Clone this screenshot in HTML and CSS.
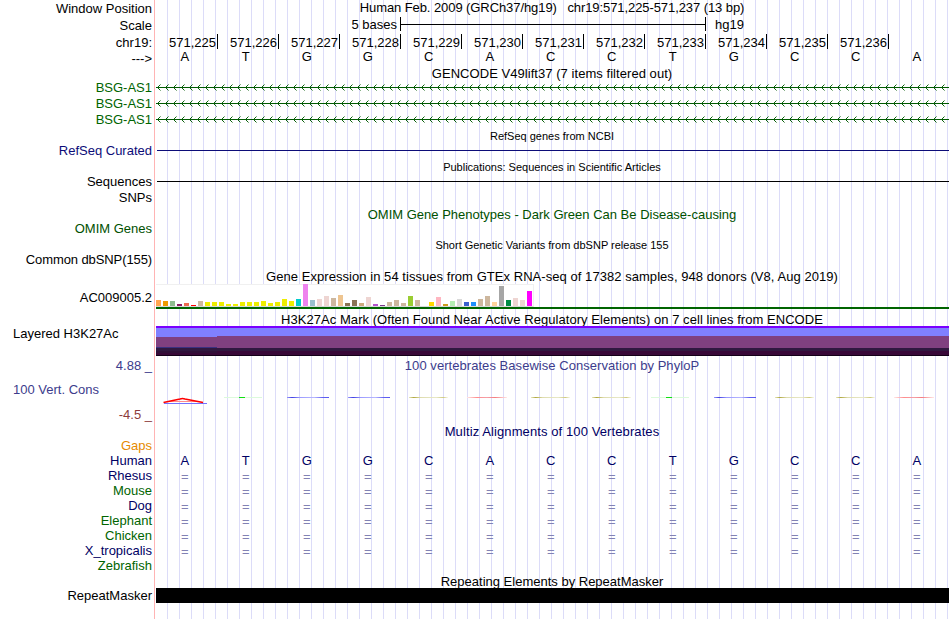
FILE: index.html
```html
<!DOCTYPE html>
<html lang="en">
  <head>
    <meta charset="UTF-8" />
    <meta name="viewport" content="width=device-width, initial-scale=1.0" />
    <title>chr19:571,225-571,237</title>
    <link rel="stylesheet" href="styles.css">
  </head>
  <body>
    <main class="browser">
      <!-- ruler -->
      <div class="row ruler">
        <div class="label">Window Position</div>
        <div class="title position-title">Human Feb. 2009 (GRCh37/hg19) &nbsp; chr19:571,225-571,237 (13 bp)</div>
      </div>
      <div class="row ruler">
        <div class="label">Scale</div>
        <div class="scale">
          <span class="scale-text">5 bases</span>
          <span class="scale-bar"></span>
          <span>hg19</span>
        </div>
      </div>
      <div class="row positions">
        <div class="label">chr19:</div>
        <div class="ticks" id="ticks"></div>
      </div>
      <div class="row strand">
        <div class="label">---&gt;</div>
        <div class="bases" data-text="ATGGCACCTGCCA"></div>
      </div>

      <!-- genes -->
      <div class="title wide gencode-title">GENCODE V49lift37 (7 items filtered out)</div>
      <div class="row gene"><div class="label">BSG-AS1</div><svg class="intron"><rect width="793" height="16" fill="url(#chevrons)" /></svg></div>
      <div class="row gene"><div class="label">BSG-AS1</div><svg class="intron"><rect width="793" height="16" fill="url(#chevrons)" /></svg></div>
      <div class="row gene"><div class="label">BSG-AS1</div><svg class="intron"><rect width="793" height="16" fill="url(#chevrons)" /></svg></div>

      <div class="title small">RefSeq genes from NCBI</div>
      <div class="row refseq"><div class="label">RefSeq Curated</div><div class="line"></div></div>

      <div class="title small">Publications: Sequences in Scientific Articles</div>
      <div class="row"><div class="label">Sequences</div><div class="line"></div></div>
      <div class="row snps"><div class="label">SNPs</div></div>

      <div class="title omim omim-title">OMIM Gene Phenotypes - Dark Green Can Be Disease-causing</div>
      <div class="row omim"><div class="label">OMIM Genes</div></div>

      <div class="title small">Short Genetic Variants from dbSNP release 155</div>
      <div class="row dbsnp"><div class="label">Common dbSNP(155)</div></div>

      <!-- expression -->
      <div class="title wide">Gene Expression in 54 tissues from GTEx RNA-seq of 17382 samples, 948 donors (V8, Aug 2019)</div>
      <div class="row gtex">
        <div class="label">AC009005.2</div>
        <div class="gtex-plot">
          <div class="bars" id="bars"></div>
          <div class="gene-model"></div>
        </div>
      </div>

      <div class="title wide h3k-title">H3K27Ac Mark (Often Found Near Active Regulatory Elements) on 7 cell lines from ENCODE</div>
      <div class="row h3k">
        <div class="label left">Layered H3K27Ac</div>
        <svg class="layers" width="793" height="30" shape-rendering="crispEdges">
          <rect width="793" height="30" fill="#8080ff" />
          <rect width="793" height="2" fill="#7a00ff" />
          <rect y="11" width="61" height="10" fill="#804080" />
          <rect x="61" y="10" width="732" height="12" fill="#804080" />
          <rect y="21" width="61" height="1" fill="#3a3080" />
          <rect y="22" width="793" height="3" fill="#301840" />
          <rect y="25" width="61" height="2" fill="#301038" />
          <rect x="61" y="25" width="732" height="5" fill="#380838" />
          <rect y="27" width="61" height="3" fill="#380838" />
          <rect y="29" width="793" height="1" fill="#140018" />
        </svg>
      </div>

      <!-- conservation -->
      <div class="row cons cons-top">
        <div class="label">4.88 _</div>
        <div class="title wide">100 vertebrates Basewise Conservation by PhyloP</div>
      </div>
      <div class="row cons cons-plot">
        <div class="cons-labels">
          <div class="label left">100 Vert. Cons</div>
          <div class="label low">-4.5 _</div>
        </div>
        <svg width="793" height="51">
          <path d="M8 30.5H51" stroke="#7373ff" />
          <path d="M14 28.5H42" stroke="#ff8a8a" />
          <path d="M7.500 29.500L24 26Q26.500 25 29 26L47 29.500" fill="none" stroke="#f00" stroke-width="1.600" />
          <g id="flat" shape-rendering="crispEdges"></g>
        </svg>
      </div>

      <!-- alignment -->
      <div class="title navy multiz-title">Multiz Alignments of 100 Vertebrates</div>
      <div class="row align"><div class="label gaps">Gaps</div></div>
      <div class="row align navy"><div class="label">Human</div><div class="bases" data-text="ATGGCACCTGCCA"></div></div>
      <div class="row align navy"><div class="label">Rhesus</div><div class="bases same" data-text="============="></div></div>
      <div class="row align green"><div class="label">Mouse</div><div class="bases same" data-text="============="></div></div>
      <div class="row align navy"><div class="label">Dog</div><div class="bases same" data-text="============="></div></div>
      <div class="row align green"><div class="label">Elephant</div><div class="bases same" data-text="============="></div></div>
      <div class="row align green"><div class="label">Chicken</div><div class="bases same" data-text="============="></div></div>
      <div class="row align navy"><div class="label">X_tropicalis</div><div class="bases same" data-text="============="></div></div>
      <div class="row align green"><div class="label">Zebrafish</div></div>

      <div class="title repeat-title">Repeating Elements by RepeatMasker</div>
      <div class="row align"><div class="label">RepeatMasker</div><div class="repeat"></div></div>
    </main>

    <svg class="defs">
      <defs>
        <pattern id="chevrons" width="8" height="16" patternUnits="userSpaceOnUse">
          <path d="M0 7.500H8" stroke="#005a00" />
          <path d="M4.500 4.500L1.500 7.500L4.500 10.500" fill="none" stroke="#005a00" stroke-width="0.950" />
        </pattern>
        <linearGradient id="flatG"><stop offset="0" stop-color="#9a9aff" /><stop offset="0.120" stop-color="#4040e0" /><stop offset="0.300" stop-color="#9a9aff" /><stop offset="0.650" stop-color="#b8b8ff" /><stop offset="0.850" stop-color="#6060f0" /><stop offset="1" stop-color="#5858f0" /></linearGradient>
        <linearGradient id="flatC"><stop offset="0" stop-color="#e8e8c0" /><stop offset="0.120" stop-color="#b0a840" /><stop offset="0.300" stop-color="#dedcae" /><stop offset="0.700" stop-color="#e8e8c8" /><stop offset="0.880" stop-color="#cfca80" /><stop offset="1" stop-color="#f8f8ec" /></linearGradient>
        <linearGradient id="flatA"><stop offset="0" stop-color="#ffe8e8" /><stop offset="0.250" stop-color="#ff8c8c" /><stop offset="0.500" stop-color="#f4a0a8" /><stop offset="0.700" stop-color="#f47c80" /><stop offset="1" stop-color="#ffe8e8" /></linearGradient>
      </defs>
    </svg>

    <script>
      // position labels, one per base
      const ticks = document.querySelector("#ticks");
      for (let pos = 225; pos <= 236; pos++) {
        const tick = document.createElement("span");
        tick.textContent = "571," + pos;
        ticks.appendChild(tick);
      }

      document.querySelectorAll(".bases").forEach((row) => {
        row.dataset.text.split("").forEach((letter) => {
          const base = document.createElement("span");
          base.textContent = letter;
          row.appendChild(base);
        });
      });

      // GTEx tissues: height, color
      const tissues = [
        [6, "#ffa54f"], [5, "#ee9a00"], [5, "#8fbc8f"], [2, "#8b1c62"], [3, "#ee6a50"], [1, "#ff0000"],
        [5, "#cdb79e"], [4, "#eeee00"], [4, "#eeee00"], [4, "#eeee00"], [2, "#eeee00"], [2, "#eeee00"],
        [4, "#eeee00"], [4, "#eeee00"], [4, "#eeee00"], [5, "#eeee00"], [3, "#eeee00"], [4, "#eeee00"],
        [7, "#eeee00"], [5, "#eeee00"], [7, "#00cdcd"], [22, "#ee82ee"], [6, "#9ac0cd"], [7, "#eed5d2"],
        [10, "#eed5d2"], [8, "#cdb79e"], [11, "#eec591"], [3, "#8b7355"], [6, "#8b7355"], [3, "#cdaa7d"],
        [9, "#eed5d2"], [2, "#b452cd"], [1, "#7a378b"], [4, "#cdb79e"], [6, "#cdb79e"], [3, "#cdb79e"],
        [10, "#9acd32"], [6, "#cdb79e"], [0, "#7a67ee"], [4, "#ffd700"], [9, "#ffb6c1"], [2, "#cd9b1d"],
        [5, "#b4eeb4"], [7, "#d9d9d9"], [4, "#3a5fcd"], [4, "#1e90ff"], [7, "#cdb79e"], [10, "#cdb79e"],
        [4, "#ffd39b"], [20, "#a6a6a6"], [6, "#008b45"], [8, "#eed5d2"], [6, "#eed5d2"], [15, "#ff00ff"],
      ];
      const bars = document.querySelector("#bars");
      tissues.forEach(([height, color]) => {
        const bar = document.createElement("i");
        bar.style.height = height + "px";
        bar.style.background = color;
        bars.appendChild(bar);
      });

      // conservation scores near zero are drawn as flat strokes
      const flat = document.querySelector("#flat");
      function stroke(x, width, fill) {
        const rect = document.createElementNS("http://www.w3.org/2000/svg", "rect");
        rect.setAttribute("x", x);
        rect.setAttribute("y", 24);
        rect.setAttribute("width", width);
        rect.setAttribute("height", 1);
        rect.setAttribute("fill", fill);
        flat.appendChild(rect);
      }
      "ATGGCACCTGCCA".split("").forEach((letter, i) => {
        const x = i * 61;
        if (i == 0) return;
        if (letter == "T") {
          stroke(x + 7, 38, "#dcfadc");
          stroke(x + 22, 6, "#10e010");
        }
        if (letter == "G") stroke(x + 9, 42, "url(#flatG)");
        if (letter == "C") stroke(x + 9, 39, "url(#flatC)");
        if (letter == "A") stroke(x + 6, 40, "url(#flatA)");
      });
    </script>
  </body>
</html>
```
FILE: styles.css
```css
body {
  margin: 0;
  background-color: white;
  font-family: "Liberation Sans", Arial, sans-serif;
  font-size: 13px;
  line-height: 15px;
  color: black;
}

.browser {
  width: 949px;
  height: 619px;
  overflow: hidden;
  background-image: linear-gradient(#ffb4b4, #ffb4b4), repeating-linear-gradient(to right, #dcdcf8 0, #dcdcf8 1px, transparent 1px, transparent 12px);
  background-repeat: no-repeat;
  background-size: 1px 100%, 782px 100%;
  background-position: 154px 0, 167px 0;
}

.row {
  display: flex;
  height: 16px;
}

.label {
  box-sizing: border-box;
  flex: none;
  width: 156px;
  padding-right: 4px;
  text-align: right;
  white-space: pre;
}

.label.left {
  padding-left: 13px;
  text-align: left;
}

.title {
  height: 15px;
  margin-left: 156px;
  padding-right: 1px;
  text-align: center;
  white-space: nowrap;
}

.row .title {
  flex: 1;
  margin-left: 0;
}

.wide {
  letter-spacing: 0.05px;
}

.position-title {
  letter-spacing: -0.08px;
}

.small {
  box-sizing: border-box;
  padding-top: 1px;
  font-size: 11px;
}

/* ruler */
.ruler {
  height: 17px;
}

.ruler .label,
.positions .label {
  padding-top: 1px;
}

.scale {
  display: flex;
}

.scale-text {
  width: 241px;
  text-align: right;
}

.scale-bar {
  box-sizing: border-box;
  width: 306px;
  height: 14px;
  margin-left: 3px;
  margin-right: 9px;
  border-left: 1px solid black;
  border-right: 1px solid black;
  background: linear-gradient(black, black) 0 7px / 100% 1px no-repeat;
}

.positions {
  height: 15px;
}

.ticks {
  display: flex;
  margin-left: 1px;
}

.ticks span {
  box-sizing: border-box;
  width: 61px;
  height: 15px;
  padding-top: 1px;
  padding-right: 1px;
  border-right: 1px solid black;
  text-align: right;
}

.strand {
  height: 17px;
}

.strand .label {
  padding-top: 2px;
}

.bases {
  display: flex;
  margin-left: -2px;
}

.bases span {
  box-sizing: border-box;
  width: 61px;
  padding-left: 0.5px;
  text-align: center;
}

/* genes */
.gencode-title,
.omim-title,
.h3k-title,
.multiz-title {
  height: 14px;
}

.gene {
  color: #006400;
}

.intron {
  width: 793px;
  height: 16px;
}

.line {
  flex: 1;
  height: 1px;
  margin-top: 7px;
  margin-left: 1px;
  background-color: currentColor;
}

.refseq {
  color: #0c0c78;
}

.snps,
.dbsnp {
  height: 17px;
}

.dbsnp .label {
  letter-spacing: -0.1px;
}

.omim {
  color: #005000;
}

/* expression */
.gtex {
  height: 28px;
}

.gtex .label {
  padding-top: 6px;
}

.gtex-plot {
  flex: 1;
}

.bars {
  box-sizing: border-box;
  display: flex;
  align-items: flex-end;
  gap: 2px;
  width: 378px;
  height: 23px;
  border-top: 1px solid #f0f0f0;
  border-right: 1px solid #f0f0f0;
  border-bottom: 1px solid #d8d8d8;
  background-color: white;
}

.bars i {
  flex: none;
  width: 5px;
}

.gene-model {
  height: 2px;
  background-color: #006400;
}

.h3k {
  height: 32px;
}

/* conservation */
.cons {
  color: #3c3c8c;
}

.cons-top {
  height: 15px;
}

.cons-plot {
  height: 51px;
}

.cons-labels {
  display: flex;
  flex-direction: column;
  justify-content: space-between;
  box-sizing: border-box;
  height: 49px;
  padding-top: 9px;
}

.low {
  color: #8c3c3c;
}

/* alignment */
.align {
  height: 15px;
}

.navy {
  color: #000064;
}

.multiz-title {
  letter-spacing: 0.1px;
}

.green {
  color: #006400;
}

.gaps {
  color: #e68a00;
}

.same {
  padding-top: 1px;
  color: #8282b4;
}

.repeat {
  flex: 1;
  background-color: black;
}

.repeat-title {
  box-sizing: border-box;
  padding-top: 1px;
}

.defs {
  position: absolute;
  width: 0;
  height: 0;
}
```
